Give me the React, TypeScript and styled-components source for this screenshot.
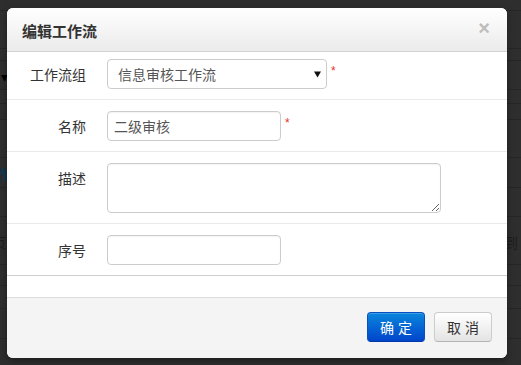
import React from "react";
import styled, { createGlobalStyle } from "styled-components";

const GlobalStyle = createGlobalStyle`
  html, body {
    margin: 0;
    padding: 0;
    background: #2e2e2e;
    overflow: hidden;
  }
  body {
    font-family: "Noto Sans CJK SC", "Liberation Sans", sans-serif;
  }
  * { box-sizing: border-box; }
`;

const Stage = styled.div`
  position: relative;
  width: 521px;
  height: 365px;
  overflow: hidden;
  background: #2e2e2e;
`;

const BackdropPage = styled.div`
  display: flex;
  flex-direction: column;
`;

const BgRow = styled.div<{ $h: number }>`
  height: ${(p) => p.$h}px;
  border-bottom: 1px solid #262626;
  display: flex;
  align-items: center;
  justify-content: space-between;
  padding: 0 3px 0 0;
`;

const BgText = styled.span<{ $color: string; $shift?: number; $bold?: boolean }>`
  font-size: 14px;
  line-height: 14px;
  color: ${(p) => p.$color};
  font-weight: ${(p) => (p.$bold ? 700 : 400)};
  margin-left: ${(p) => p.$shift ?? 0}px;
`;

const Modal = styled.div`
  position: absolute;
  top: 8px;
  left: 7px;
  width: 500px;
  height: 350px;
  background: #fff;
  border-radius: 6px;
  overflow: hidden;
  box-shadow: 0 3px 7px rgba(0, 0, 0, 0.35);
  display: flex;
  flex-direction: column;
`;

const Header = styled.div`
  height: 44px;
  flex: none;
  display: flex;
  align-items: center;
  justify-content: space-between;
  padding: 2px 15px 0 15px;
  background: linear-gradient(#ffffff, #ebebeb);
  border-bottom: 1px solid #d2d2d2;
`;

const Title = styled.h3`
  margin: 0;
  font-size: 15px;
  font-weight: 700;
  color: #333;
  line-height: 20px;
`;

const Close = styled.span`
  font-family: "Liberation Sans", Arial, sans-serif;
  font-size: 20px;
  font-weight: 700;
  line-height: 20px;
  color: #bdbdbd;
  margin: -6px 2px 0 0;
`;

const Body = styled.div`
  display: flex;
  flex-direction: column;
`;

const Row = styled.div<{ $top: number; $last?: boolean }>`
  display: grid;
  grid-template-columns: 100px 1fr;
  padding: ${(p) => p.$top}px 0 10px 0;
  border-bottom: 1px solid ${(p) => (p.$last ? "#cfcfcf" : "#e9e9e9")};
`;

const Label = styled.label`
  text-align: right;
  padding-right: 21px;
  font-size: 14px;
  line-height: 30px;
  color: #333;
`;

const Field = styled.div`
  display: flex;
  align-items: flex-start;
`;

const Required = styled.span`
  font-family: "Liberation Sans", Arial, sans-serif;
  color: #e8322e;
  font-size: 12px;
  line-height: 12px;
  margin: 6px 0 0 4px;
`;

const SelectBox = styled.div`
  width: 220px;
  height: 30px;
  border: 1px solid #cccccc;
  border-radius: 4px;
  display: flex;
  align-items: center;
  justify-content: space-between;
  padding: 0 5px 0 10px;
  font-size: 14px;
  color: #555;
  background: #fff;
`;

const Caret = styled.svg`
  width: 7px;
  height: 7px;
  margin-top: 1px;
`;

const Input = styled.div<{ $w: number; $h: number }>`
  width: ${(p) => p.$w}px;
  height: ${(p) => p.$h}px;
  border: 1px solid #cccccc;
  border-radius: 4px;
  padding: 0 6px;
  font-size: 14px;
  line-height: 28px;
  color: #555;
  background: #fff;
  box-shadow: inset 0 1px 1px rgba(0, 0, 0, 0.05);
`;

const TextArea = styled.textarea`
  width: 334px;
  height: 50px;
  border: 1px solid #cccccc;
  border-radius: 4px;
  padding: 4px 6px;
  font-size: 14px;
  font-family: inherit;
  color: #555;
  resize: both;
  outline: none;
  box-shadow: inset 0 1px 1px rgba(0, 0, 0, 0.05);
`;

const Spacer = styled.div`
  height: 21px;
  flex: none;
`;

const Footer = styled.div`
  flex: 1;
  border-top: 1px solid #dcdcdc;
  background: #f4f4f4;
  display: flex;
  justify-content: flex-end;
  align-items: flex-start;
  gap: 9px;
  padding: 14px 15px 0 0;
`;

const Button = styled.button<{ $primary?: boolean }>`
  width: 58px;
  height: 30px;
  border-radius: 4px;
  font-family: inherit;
  font-size: 14px;
  letter-spacing: 4px;
  padding: 0 0 0 4px;
  line-height: 28px;
  cursor: pointer;
  color: ${(p) => (p.$primary ? "#fff" : "#333")};
  background: ${(p) =>
    p.$primary
      ? "linear-gradient(#0a86dc, #0045cb)"
      : "linear-gradient(#ffffff, #e4e4e4)"};
  border: 1px solid ${(p) => (p.$primary ? "#0a4fc0" : "#cccccc")};
  border-bottom-color: ${(p) => (p.$primary ? "#0038a8" : "#b5b5b5")};
  box-shadow: inset 0 1px 0 rgba(255, 255, 255, 0.2);
`;

const bgRows: { h: number; left?: React.ReactNode; right?: React.ReactNode }[] = [
  { h: 11 },
  { h: 38 },
  { h: 12 },
  { h: 29, left: <BgText $color="#000" $shift={1}>▾</BgText> },
  { h: 14 },
  { h: 16 },
  { h: 38 },
  { h: 30, left: <BgText $color="#0c3a58" $bold $shift={-4}>作</BgText> },
  { h: 29 },
  {
    h: 48,
    left: <BgText $color="#1c1c1c" $shift={-8}>页</BgText>,
    right: <BgText $color="#1c1c1c">到</BgText>,
  },
  { h: 21 },
  { h: 23 },
  { h: 30 },
];

export default function App() {
  return (
    <Stage>
      <GlobalStyle />
      <BackdropPage>
        {bgRows.map((r, i) => (
          <BgRow key={i} $h={r.h}>
            <span>{r.left}</span>
            <span>{r.right}</span>
          </BgRow>
        ))}
      </BackdropPage>
      <Modal>
        <Header>
          <Title>编辑工作流</Title>
          <Close>×</Close>
        </Header>
        <Body>
          <Row $top={7}>
            <Label>工作流组</Label>
            <Field>
              <SelectBox>
                <span>信息审核工作流</span>
                <Caret viewBox="0 0 7 7">
                  <path d="M0 0.5 H7 L3.5 6.5 Z" fill="#111" />
                </Caret>
              </SelectBox>
              <Required>*</Required>
            </Field>
          </Row>
          <Row $top={11}>
            <Label>名称</Label>
            <Field>
              <Input $w={174} $h={30}>二级审核</Input>
              <Required>*</Required>
            </Field>
          </Row>
          <Row $top={11}>
            <Label>描述</Label>
            <Field>
              <TextArea />
            </Field>
          </Row>
          <Row $top={11} $last>
            <Label>序号</Label>
            <Field>
              <Input $w={174} $h={30} />
            </Field>
          </Row>
        </Body>
        <Spacer />
        <Footer>
          <Button $primary>确定</Button>
          <Button>取消</Button>
        </Footer>
      </Modal>
    </Stage>
  );
}
